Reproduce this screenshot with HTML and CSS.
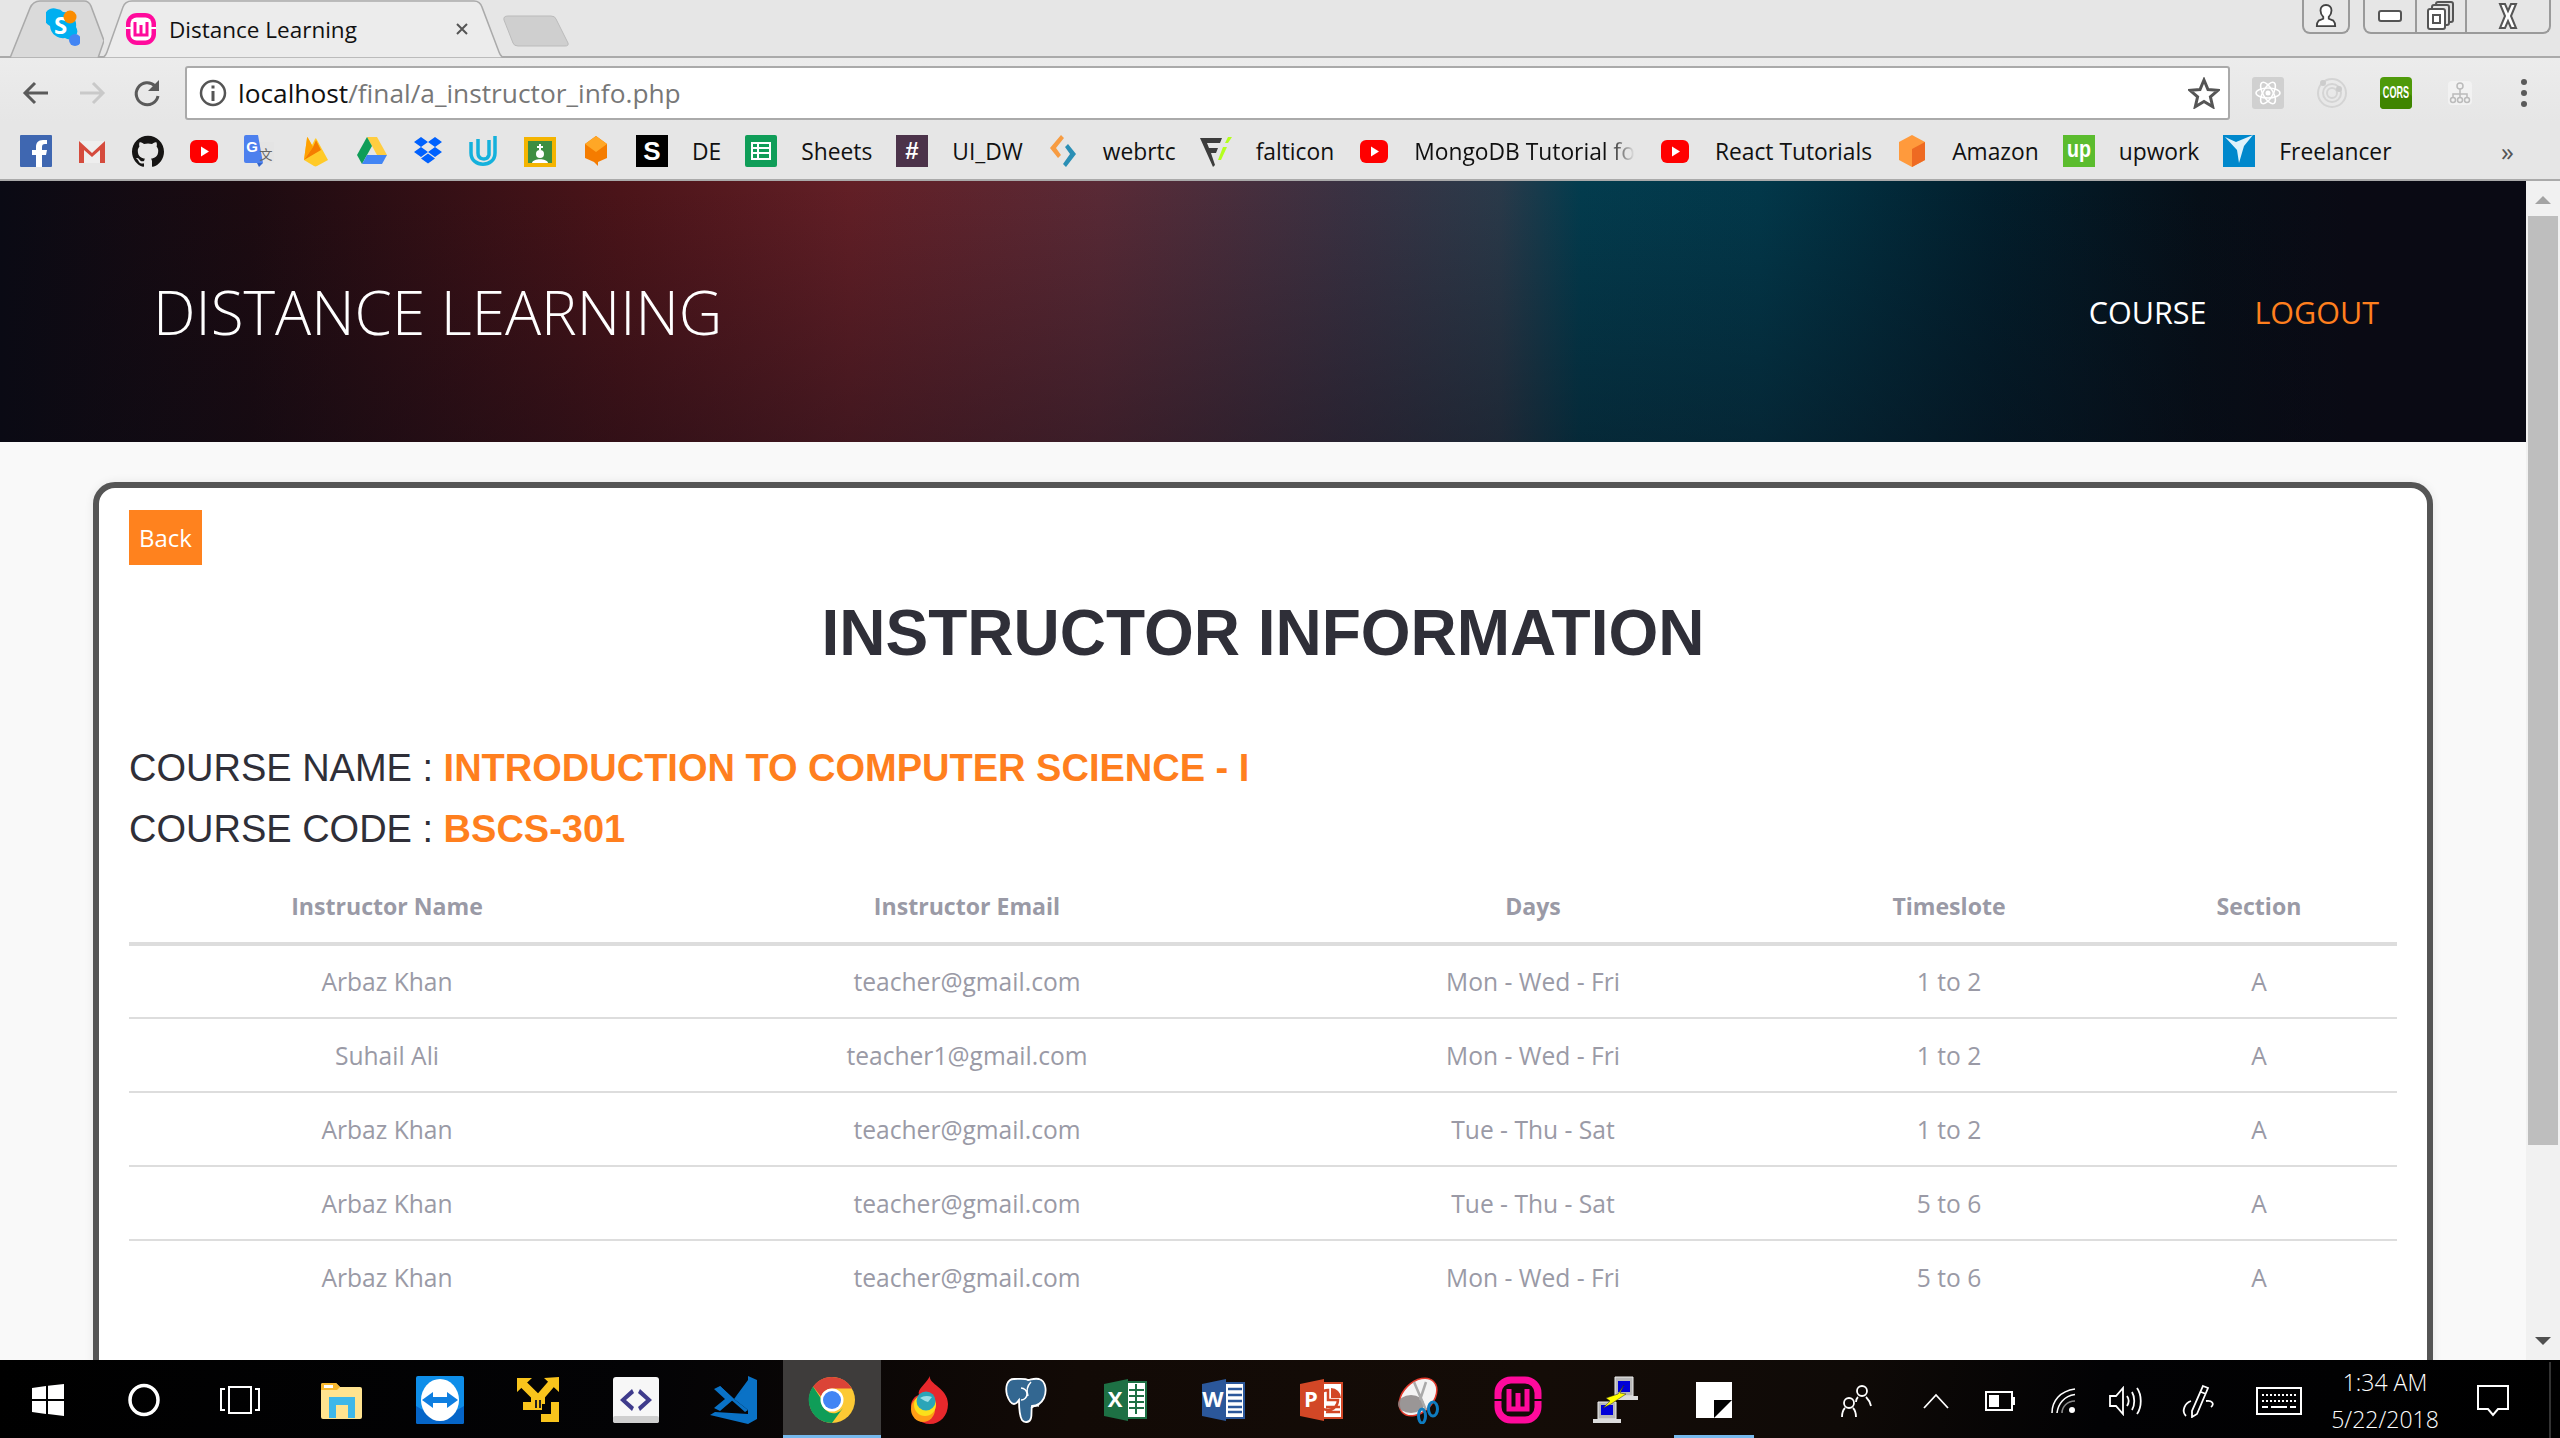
FILE: index.html
```html
<!DOCTYPE html>
<html lang="en">
<head>
  <meta charset="UTF-8" />
  <title>Distance Learning</title>
  <link rel="stylesheet" href="styles.css">
</head>
<body>
  <svg class="defs" width="0" height="0">
    <symbol id="yt" viewBox="0 0 32 32"><rect x="2" y="5" width="28" height="23" rx="6" fill="#f00"/><path d="M13 11.500l8 5-8 5z" fill="#fff"/></symbol>
  </svg>

  <div class="tabstrip">
    <div class="tab tab-pin">
      <svg class="tab-bg" viewBox="0 0 94 57" preserveAspectRatio="none"><path d="M0 57L20 8Q23 1 30 1H74Q79 1 81 6L94 40 88 57z" fill="#dadada" stroke="#aaa" stroke-width="1.500"/></svg>
      <svg class="tab-icon" width="34" height="38" viewBox="0 0 34 38"><path d="M11 1a8 8 0 0 1 6 3 13 13 0 0 1 13 15 8 8 0 0 1-11 11A13 13 0 0 1 4 18 9 9 0 0 1 11 1z" fill="#00aff0"/><text x="8" y="26" class="skype-s">S</text><circle cx="24" cy="9" r="6.500" fill="#fb8c00"/><circle cx="29" cy="32" r="6" fill="#4285f4"/></svg>
    </div>
    <div class="tab tab-active">
      <svg class="tab-bg" viewBox="0 0 408 57" preserveAspectRatio="none"><path d="M0 57Q6 57 8 51L24 7Q26 1 33 1H375Q381 1 383 7L400 51Q402 57 408 57z" fill="#ececec" stroke="#aaa" stroke-width="1.500"/></svg>
      <svg class="favicon" width="30" height="32" viewBox="0 0 30 32"><rect width="30" height="32" rx="11" fill="#ff0a9c"/><rect x="4.500" y="4.500" width="21" height="23" rx="6" fill="#fff"/><path d="M9 9v13h12V9M15 12v10" fill="none" stroke="#ff0a9c" stroke-width="3"/><path d="M0 14h5v2H0zM25 14h5v2h-5z" fill="#fff"/></svg>
      <span class="tab-title">Distance Learning</span>
      <svg class="tab-close" width="14" height="14" viewBox="0 0 14 14"><path d="M2 2l10 10M12 2L2 12" stroke="#555" stroke-width="2"/></svg>
    </div>
    <div class="tab tab-new">
      <svg class="tab-bg" viewBox="0 0 66 32" preserveAspectRatio="none"><path d="M1 5Q0 1 5 1H48Q52 1 53 4L65 28Q66 31 62 31H15Q11 31 10 28z" fill="#cfcfcf" stroke="#bbb"/></svg>
    </div>
    <div class="win-btns">
      <div class="win-group">
        <span class="win-btn win-profile"><svg width="22" height="26" viewBox="0 0 24 28"><path d="M12 2c4 0 6 3 6 6 0 3-1 5-3 7v2l5 2c1 1 2 3 2 6H2c0-3 1-5 2-6l5-2v-2C7 13 6 11 6 8c0-3 2-6 6-6z" fill="#fff" stroke="#444" stroke-width="2"/></svg></span>
      </div>
      <div class="win-group">
        <span class="win-btn"><svg width="26" height="16" viewBox="0 0 26 16"><rect x="2" y="3" width="22" height="10" rx="2" fill="#fff" stroke="#555" stroke-width="2"/></svg></span>
        <span class="win-btn"><svg width="28" height="30" viewBox="0 0 28 30"><rect x="9" y="1" width="17" height="20" rx="2" fill="#ddd" stroke="#555" stroke-width="2"/><rect x="5" y="4" width="17" height="20" rx="2" fill="#e6e6e6" stroke="#555" stroke-width="2"/><rect x="1" y="8" width="17" height="20" rx="2" fill="#fff" stroke="#555" stroke-width="2"/><rect x="6" y="14" width="7" height="8" fill="none" stroke="#555" stroke-width="2"/></svg></span>
        <span class="win-btn win-close"><svg width="24" height="28" viewBox="0 0 24 28"><path d="M4 2h5l3 7 3-7h5l-5 12 5 12h-5l-3-7-3 7H4l5-12z" fill="#fff" stroke="#555" stroke-width="2"/></svg></span>
      </div>
    </div>
  </div>

  <div class="toolbar">
    <div class="nav-icons">
      <svg width="32" height="32" viewBox="0 0 32 32"><path d="M28 16H6M15 6L5 16l10 10" fill="none" stroke="#5a5a5a" stroke-width="3"/></svg>
      <svg width="32" height="32" viewBox="0 0 32 32"><path d="M4 16h22M17 6l10 10-10 10" fill="none" stroke="#c9c9c9" stroke-width="3"/></svg>
      <svg width="32" height="32" viewBox="0 0 32 32"><path d="M26 19a11 11 0 1 1-3-10" fill="none" stroke="#5a5a5a" stroke-width="3"/><path d="M27 3v11H16z" fill="#5a5a5a"/></svg>
    </div>
    <div class="omnibox">
      <svg class="info" width="30" height="30" viewBox="0 0 30 30"><circle cx="15" cy="15" r="12" fill="none" stroke="#555" stroke-width="2.500"/><path d="M13.500 13h3v10h-3zM13.500 7.500h3v3h-3z" fill="#555"/></svg>
      <span class="url"><span class="url-host">localhost</span>/final/a_instructor_info.php</span>
      <svg class="star" width="32" height="32" viewBox="0 0 32 32"><path d="M16 3l4 9.500 10 .8-7.600 6.600 2.300 9.800L16 24.500l-8.700 5.200 2.300-9.800L2 13.300l10-.8z" fill="none" stroke="#555" stroke-width="3"/></svg>
    </div>
    <div class="ext-icons">
      <svg width="32" height="32" viewBox="0 0 32 32"><rect width="32" height="32" rx="3" fill="#d0d0d0"/><g fill="none" stroke="#fff" stroke-width="1.500"><ellipse cx="16" cy="16" rx="12" ry="5"/><ellipse cx="16" cy="16" rx="12" ry="5" transform="rotate(60 16 16)"/><ellipse cx="16" cy="16" rx="12" ry="5" transform="rotate(120 16 16)"/></g><circle cx="16" cy="16" r="2.500" fill="#fff"/></svg>
      <svg width="32" height="32" viewBox="0 0 32 32"><g fill="none" stroke="#d4d4d4" stroke-width="2"><circle cx="16" cy="16" r="14"/><circle cx="16" cy="16" r="9"/><circle cx="16" cy="16" r="5"/></g><circle cx="7" cy="6" r="3" fill="#ccc"/><circle cx="23" cy="12" r="3" fill="#ccc"/></svg>
      <svg width="32" height="32" viewBox="0 0 32 32"><rect width="32" height="32" rx="4" fill="#4f9a0a"/><rect y="17" width="32" height="15" rx="4" fill="#3f8500"/><g transform="translate(16 21) scale(.7 1.250)"><text class="cors">CORS</text></g></svg>
      <svg width="32" height="32" viewBox="0 0 32 32"><rect x="4" y="4" width="24" height="24" rx="4" fill="#f2f2f2"/><g fill="none" stroke="#bbb" stroke-width="1.500"><circle cx="16" cy="9" r="3"/><circle cx="9" cy="23" r="2.500"/><circle cx="16" cy="23" r="2.500"/><circle cx="23" cy="23" r="2.500"/><path d="M16 12v8M9 20v-3h14v3"/></g></svg>
      <svg width="32" height="32" viewBox="0 0 32 32"><circle cx="16" cy="5" r="3" fill="#5a5a5a"/><circle cx="16" cy="16" r="3" fill="#5a5a5a"/><circle cx="16" cy="27" r="3" fill="#5a5a5a"/></svg>
    </div>
  </div>

  <div class="bookmarks">
    <a class="bm"><svg class="bm-icon" viewBox="0 0 32 32"><rect width="32" height="32" rx="1" fill="#3f67b1"/><path d="M22 32V20h4l1-5h-5v-3c0-2 .8-3 3-3h2V5h-4c-5 0-7 3-7 7v3h-4v5h4v12z" fill="#fff"/></svg></a>
    <a class="bm"><svg class="bm-icon" viewBox="0 0 32 32"><path d="M3 6h26v22H3z" fill="#eee"/><path d="M3 28V6l13 12L29 6v22h-5V15l-8 7-8-7v13z" fill="#d54b3d"/></svg></a>
    <a class="bm"><svg class="bm-icon" viewBox="0 0 24 24"><path d="M12 .5C5.370.5 0 5.870 0 12.500c0 5.300 3.440 9.800 8.200 11.390.6.110.82-.26.82-.58v-2.030c-3.340.73-4.040-1.610-4.040-1.610-.55-1.390-1.340-1.760-1.340-1.760-1.090-.75.08-.73.08-.73 1.200.08 1.840 1.240 1.840 1.240 1.070 1.830 2.810 1.300 3.500 1 .11-.78.42-1.300.76-1.600-2.670-.3-5.470-1.330-5.470-5.930 0-1.310.47-2.380 1.240-3.220-.13-.3-.54-1.520.12-3.180 0 0 1.010-.32 3.300 1.230a11.500 11.500 0 0 1 6 0c2.290-1.550 3.300-1.230 3.300-1.230.66 1.660.25 2.880.12 3.180.77.84 1.240 1.910 1.240 3.220 0 4.610-2.810 5.630-5.480 5.920.43.37.81 1.100.81 2.220v3.290c0 .32.22.7.83.58C20.570 22.290 24 17.800 24 12.500 24 5.870 18.630.5 12 .5z" fill="#161514"/></svg></a>
    <a class="bm"><svg class="bm-icon"><use href="#yt"/></svg></a>
    <a class="bm"><svg class="bm-icon" viewBox="0 0 32 32"><path d="M15 7h15v21H15z" fill="#e4e4e4"/><path d="M0 2a2 2 0 0 1 2-2h12l5 28H2a2 2 0 0 1-2-2z" fill="#4d80ee"/><path d="M13 28h6l-4 4z" fill="#3566c9"/><text x="8" y="17" class="gt-g">G</text><text x="22" y="24" class="gt-a">文</text></svg></a>
    <a class="bm"><svg class="bm-icon" viewBox="0 0 32 32"><path d="M4 25L7 3c0-1 1-1 1 0l4 7 3-6c.5-1 1-1 1.500 0L28 25l-11 6c-1 .5-2 .5-3 0z" fill="#ffca28"/><path d="M4 25L7 3c0-1 1-1 1 0l5 9z" fill="#ffa000"/><path d="M13 12l3-7 5 10-17 10z" fill="#f57c00"/></svg></a>
    <a class="bm"><svg class="bm-icon" viewBox="0 0 32 32"><path d="M11 2h10l10 18H21z" fill="#ffcd40"/><path d="M11 2L1 20l5 9 10-18z" fill="#0f9d58"/><path d="M6 29h20l5-9H11z" fill="#4285f4"/></svg></a>
    <a class="bm"><svg class="bm-icon" viewBox="0 0 32 32"><path d="M9 2l7 5-7 5-7-5zM23 2l7 5-7 5-7-5zM9 12l7 5-7 5-7-5zM23 12l7 5-7 5-7-5zM16 18.500l7 5-7 5-7-5z" fill="#0061fe"/></svg></a>
    <a class="bm"><svg class="bm-icon" viewBox="0 0 32 32"><path d="M3 7v11c0 15 24 15 24 0V1" fill="none" stroke="#15b1dc" stroke-width="3.500"/><path d="M10 4v14c0 7 9 8 11 2V5" fill="none" stroke="#15b1dc" stroke-width="3.500"/></svg></a>
    <a class="bm"><svg class="bm-icon" viewBox="0 0 32 32"><rect y="2" width="32" height="30" fill="#f4b400"/><rect x="4" y="6" width="24" height="22" fill="#3e8e41"/><circle cx="16" cy="19" r="4" fill="#fff"/><path d="M8 28c1-5 15-5 16 0z" fill="#fff"/><path d="M15 9h2v2h2v2h-2v2h-2v-2h-2v-2h2z" fill="#fff"/></svg></a>
    <a class="bm"><svg class="bm-icon" viewBox="0 0 32 32"><path d="M16 1l11 8v14l-9 4v4l-4-4-9-4V9z" fill="#f57c00"/><path d="M16 1l11 8-11 8L5 9z" fill="#ffa726"/></svg></a>
    <a class="bm"><svg class="bm-icon" viewBox="0 0 32 32"><rect width="32" height="32" fill="#000"/><text x="16" y="25" class="slash-s">S</text></svg></a>
    <a class="bm bm-text-only"><span>DE</span></a>
    <a class="bm"><svg class="bm-icon" viewBox="0 0 32 32"><rect width="32" height="32" rx="2" fill="#0f9d58"/><path d="M7 8h18v16H7zM7 13h18M7 18h18M13 8v16" fill="none" stroke="#fff" stroke-width="2"/></svg><span>Sheets</span></a>
    <a class="bm"><svg class="bm-icon" viewBox="0 0 32 32"><rect width="32" height="32" fill="#4c334a"/><text x="16" y="24" class="slack-h">#</text></svg><span>UI_DW</span></a>
    <a class="bm"><svg class="bm-icon" viewBox="0 0 32 32"><path d="M14 0l3 3-8 10 5 7-3 3L3 13z" fill="#f79c42"/><path d="M18 12l3-3 8 10-10 13-3-3 7-10z" fill="#2a8fb5"/></svg><span>webrtc</span></a>
    <a class="bm"><svg class="bm-icon" viewBox="0 0 32 32"><path d="M0 3h22l-2 5H7l2 5h9l-2 5h-5l4 12-2 2z" fill="#3c3c3c"/><path d="M25 8l3-6h4l-4 6zM23 12h4l-6 13h-3z" fill="#b4ff1e"/></svg><span>falticon</span></a>
    <a class="bm"><svg class="bm-icon"><use href="#yt"/></svg><span class="bm-fade">MongoDB Tutorial fo</span></a>
    <a class="bm"><svg class="bm-icon"><use href="#yt"/></svg><span>React Tutorials</span></a>
    <a class="bm"><svg class="bm-icon" viewBox="0 0 32 32"><path d="M16 0l13 7v18l-13 7-13-7V7z" fill="#ff9a3c"/><path d="M16 14l13-7v18l-13 7z" fill="#ee6a22"/></svg><span>Amazon</span></a>
    <a class="bm"><svg class="bm-icon" viewBox="0 0 32 32"><rect width="32" height="32" fill="#5bbc2e"/><text x="16" y="22" class="upw" textLength="24" lengthAdjust="spacingAndGlyphs">up</text></svg><span>upwork</span></a>
    <a class="bm"><svg class="bm-icon" viewBox="0 0 32 32"><rect width="32" height="32" fill="#0088cc"/><path d="M2 2l11 5 17-7-9 11-5 17-2-13z" fill="#dff2fb"/></svg><span>Freelancer</span></a>
    <span class="bm-more">&raquo;</span>
  </div>

  <div class="page">
    <div class="content">
      <header class="site-header">
        <div class="brand">DISTANCE LEARNING</div>
        <nav class="site-nav">
          <a>COURSE</a>
          <a class="logout">LOGOUT</a>
        </nav>
      </header>
      <main class="main">
        <div class="card">
          <a class="back-btn">Back</a>
          <h1 class="card-title">INSTRUCTOR INFORMATION</h1>
          <h3 class="course-line">COURSE NAME : <b>INTRODUCTION TO COMPUTER SCIENCE - I</b></h3>
          <h3 class="course-line">COURSE CODE : <b>BSCS-301</b></h3>
          <table class="info-table">
            <thead>
              <tr><th class="c1">Instructor Name</th><th class="c2">Instructor Email</th><th class="c3">Days</th><th class="c4">Timeslote</th><th class="c5">Section</th></tr>
            </thead>
            <tbody>
              <tr><td>Arbaz Khan</td><td>teacher@gmail.com</td><td>Mon - Wed - Fri</td><td>1 to 2</td><td>A</td></tr>
              <tr><td>Suhail Ali</td><td>teacher1@gmail.com</td><td>Mon - Wed - Fri</td><td>1 to 2</td><td>A</td></tr>
              <tr><td>Arbaz Khan</td><td>teacher@gmail.com</td><td>Tue - Thu - Sat</td><td>1 to 2</td><td>A</td></tr>
              <tr><td>Arbaz Khan</td><td>teacher@gmail.com</td><td>Tue - Thu - Sat</td><td>5 to 6</td><td>A</td></tr>
              <tr><td>Arbaz Khan</td><td>teacher@gmail.com</td><td>Mon - Wed - Fri</td><td>5 to 6</td><td>A</td></tr>
            </tbody>
          </table>
        </div>
      </main>
    </div>
    <div class="scrollbar">
      <div class="arrow-up"></div>
      <div class="thumb"></div>
      <div class="arrow-down"></div>
    </div>
  </div>

  <div class="taskbar">
    <div class="task-start">
      <span class="task-btn"><svg width="48" height="48" viewBox="0 0 48 48"><path d="M8 12l14-2v13H8zM24 9.700L40 8v15H24zM8 25h14v13L8 36zM24 25h16v15l-16-2z" fill="#fff"/></svg></span>
      <span class="task-btn"><svg width="48" height="48" viewBox="0 0 48 48"><ellipse cx="24" cy="24" rx="14" ry="14.500" fill="none" stroke="#fff" stroke-width="3.500"/></svg></span>
      <span class="task-btn"><svg width="48" height="48" viewBox="0 0 48 48"><path d="M13 11h22v26H13z" fill="none" stroke="#fff" stroke-width="2"/><path d="M9 13H5v21h4M39 13h4v21h-4" fill="none" stroke="#fff" stroke-width="2"/></svg></span>
    </div>
    <div class="task-apps">
      <span class="task-app"><svg width="48" height="48" viewBox="0 0 48 48"><path d="M3 9a2 2 0 0 1 2-2h13l4 4h20a2 2 0 0 1 2 2v28a2 2 0 0 1-2 2H5a2 2 0 0 1-2-2z" fill="#ffe38f"/><path d="M3 9a2 2 0 0 1 2-2h13l4 4-3 3H3z" fill="#f8b82e"/><rect x="6" y="9" width="9" height="3" fill="#fff"/><path d="M11 42V21h26v21h-7V29H18v13z" fill="#3db7e9"/></svg></span>
      <span class="task-app"><svg width="48" height="48" viewBox="0 0 48 48"><rect width="48" height="48" rx="2" fill="#0e8ee9"/><path d="M0 30v16a2 2 0 0 0 2 2h44a2 2 0 0 0 2-2V30l-24 14z" fill="#0565c8"/><ellipse cx="24" cy="24" rx="19" ry="21" fill="#fff"/><path d="M6 24l11-8v5h14v-5l11 8-11 8v-5H17v5z" fill="#0e7ee0"/></svg></span>
      <span class="task-app"><svg width="48" height="48" viewBox="0 0 48 48"><g fill="none" stroke="#f9c41c" stroke-width="8"><path d="M9 8l12 12v8"/><path d="M39 6L27 20v8"/><path d="M41 26v16H27"/><path d="M9 30h14"/></g><path d="M3 2h15L3 16zM45 1v15L30 2zM20 22h8v12h-8z" fill="#f9c41c"/><path d="M21 24h6v8h-6z" fill="#222"/><path d="M23 24h2v8h-2z" fill="#f9c41c"/></svg></span>
      <span class="task-app"><svg width="48" height="48" viewBox="0 0 48 48"><rect x="1" y="1" width="46" height="46" rx="3" fill="#f7f7f7"/><rect x="1" y="40" width="46" height="7" rx="2" fill="#cfcfcf"/><path d="M20 13L8 24l12 11 2-4-8-7 8-7zM28 13l12 11-12 11-2-4 8-7-8-7z" fill="#3f3b8c"/></svg></span>
      <span class="task-app"><svg width="48" height="48" viewBox="0 0 48 48"><path d="M38 0l9 4v39l-9 5L0 39l5-3 33 2zM38 10v24L24 23z" fill="#0a72c6"/><path d="M24 23L10 35l-6-3 11-9L4 13l6-3z" fill="#0a72c6"/><path d="M10 10l14 13 14-19v8L24 23l14 11-3 2L10 14z" fill="#0a72c6"/></svg></span>
      <span class="task-app task-active"><svg width="48" height="48" viewBox="0 0 48 48"><circle cx="24" cy="24" r="23" fill="#fcc934"/><path d="M24 1a23 23 0 0 1 20 11.500H24a11.500 11.500 0 0 0-11 8L5 10.500A23 23 0 0 1 24 1z" fill="#db4437"/><path d="M5 10.500A23 23 0 0 0 24 47l11-15a11.500 11.500 0 0 1-21-8z" fill="#0f9d58"/><circle cx="24" cy="24" r="11.500" fill="#fff"/><circle cx="24" cy="24" r="9" fill="#4285f4"/></svg></span>
      <span class="task-app"><svg width="48" height="48" viewBox="0 0 48 48"><path d="M24 0c-2 8 18 12 18 28 0 12-8 20-18 20S5 40 5 30c0-6 4-10 8-11-2-6 6-10 11-19z" fill="#e8282c"/><ellipse cx="17" cy="33" rx="12" ry="13" fill="#ff9e16"/><ellipse cx="19" cy="29" rx="11" ry="11" fill="#fbe01b"/><circle cx="20" cy="25" r="9.500" fill="#2aa5b8"/><path d="M14 22c3-2 7-3 12-1l-4 5-3-1z" fill="#9adfe6"/></svg></span>
      <span class="task-app"><svg width="48" height="48" viewBox="0 0 48 48"><path d="M10 3c-7 0-9 8-7 16 2 6 5 9 7 9 3 0 4-3 5-4 0 6 0 15 3 20 2 3 8 3 9-2 1-3 0-8 1-12 4 0 9-2 12-8 3-7 2-17-5-19-6-1-8 1-11 1-3-2-9-1-14-1z" fill="#336791" stroke="#fff" stroke-width="1.800"/><path d="M27 6c-3 3-5 8-3 14M17 12a3 3 0 0 1 0 12M35 30c-3-1-5 0-8 2" fill="none" stroke="#fff" stroke-width="1.500"/></svg></span>
      <span class="task-app"><svg width="48" height="48" viewBox="0 0 48 48"><path d="M24 6h20v36H24z" fill="#fff" stroke="#1d7044" stroke-width="2"/><path d="M27 14h15M27 20h15M27 26h15M27 32h15M34 8v30" stroke="#1d7044" stroke-width="2"/><path d="M2 8l24-5v42L2 40z" fill="#1d7044"/><text x="13" y="31" class="office-l">X</text></svg></span>
      <span class="task-app"><svg width="48" height="48" viewBox="0 0 48 48"><path d="M24 7h20v35H24z" fill="#fff" stroke="#2b579a" stroke-width="2"/><path d="M28 13h14M28 19h14M28 25h14M28 31h14M28 36h14" stroke="#2b579a" stroke-width="2.500"/><path d="M2 8l24-5v42L2 40z" fill="#2b579a"/><text x="13" y="31" class="office-l">W</text></svg></span>
      <span class="task-app"><svg width="48" height="48" viewBox="0 0 48 48"><path d="M24 7h20v35H24z" fill="#fff" stroke="#d24726" stroke-width="2"/><path d="M33 12v10h10a10 10 0 0 0-10-10z" fill="#d24726"/><path d="M30 14a10 10 0 1 0 10 10H30zM28 31h14M28 36h14" fill="none" stroke="#d24726" stroke-width="2.500"/><path d="M2 8l24-5v42L2 40z" fill="#d24726"/><text x="13" y="31" class="office-l">P</text></svg></span>
      <span class="task-app"><svg width="48" height="48" viewBox="0 0 48 48"><ellipse cx="22" cy="21" rx="22" ry="15" transform="rotate(-45 22 21)" fill="#f4f4f4" stroke="#e23a2c" stroke-width="1.500"/><ellipse cx="15" cy="28" rx="13" ry="9" fill="#8a8585" opacity=".85"/><path d="M18 6l12 28M30 6L24 24" stroke="#aaa" stroke-width="2.500"/><ellipse cx="37" cy="33" rx="4.500" ry="7" fill="none" stroke="#0f7cc0" stroke-width="3"/><ellipse cx="26" cy="40" rx="3.500" ry="7" fill="none" stroke="#0f7cc0" stroke-width="3"/></svg></span>
      <span class="task-app"><svg width="48" height="48" viewBox="0 0 48 48"><rect x="4" y="4" width="40" height="40" rx="13" fill="none" stroke="#ff0a9c" stroke-width="7"/><path d="M15 13v20h18V13M24 17v16" fill="none" stroke="#ff0a9c" stroke-width="5"/><path d="M0 23h8v2H0zM40 23h8v2h-8z" fill="#120c08"/></svg></span>
      <span class="task-app"><svg width="48" height="48" viewBox="0 0 48 48"><path d="M23 1h18v19H23z" fill="#b8b8b8" stroke="#eee"/><path d="M26 5h12v11H26z" fill="#0000d8"/><path d="M22 20h24v4H22z" fill="#ddd"/><path d="M6 26h18v17H6z" fill="#b8b8b8" stroke="#eee"/><path d="M9 29h12v10H9z" fill="#0000d8"/><path d="M1 43h28v4H1z" fill="#ddd"/><path d="M14 22l12-4 6-9-4 8 6 1-15 10-8 4 7-7z" fill="#ffff00" stroke="#222" stroke-width=".5"/></svg></span>
      <span class="task-app task-open"><svg width="36" height="36" viewBox="0 0 36 36"><rect width="36" height="36" fill="#fff"/><path d="M18 18h18L18 36z" fill="#000"/></svg></span>
    </div>
    <div class="tray">
      <svg class="tray-people" width="34" height="36" viewBox="0 0 34 36"><g fill="none" stroke="#fff" stroke-width="1.800"><circle cx="22" cy="8" r="5"/><path d="M18 14c-2 2-2 5-2 5M26 14c2 2 4 4 5 9"/><circle cx="9" cy="20" r="5"/><path d="M5 25c-2 2-3 5-3 9M13 25c2 2 3 5 3 9"/></g></svg>
      <svg class="tray-caret" width="26" height="16" viewBox="0 0 26 16"><path d="M1 15L13 2l12 13" fill="none" stroke="#fff" stroke-width="1.800"/></svg>
      <svg class="tray-batt" width="30" height="20" viewBox="0 0 30 20"><rect x="1" y="1" width="26" height="18" fill="none" stroke="#fff" stroke-width="2"/><rect x="4" y="4" width="10" height="12" fill="#fff"/><rect x="28" y="6" width="2" height="8" fill="#fff"/></svg>
      <svg class="tray-wifi" width="28" height="26" viewBox="0 0 28 26"><g fill="none" stroke="#fff" stroke-width="1.600"><path d="M1 25C1 13 9 3 24 1"/><path d="M6 25C7 16 13 8 24 6.500"/></g><path d="M11 25c0-6 5-12 13-12" fill="none" stroke="#888" stroke-width="1.600"/><circle cx="21" cy="22" r="3" fill="#fff"/></svg>
      <svg class="tray-vol" width="34" height="30" viewBox="0 0 34 30"><path d="M1 10h6l7-8v26l-7-8H1z" fill="none" stroke="#fff" stroke-width="1.800"/><path d="M18 10c2 3 2 7 0 10M23 6c3 5 3 13 0 18M28 2c5 7 5 19 0 26" fill="none" stroke="#fff" stroke-width="1.800"/></svg>
      <svg class="tray-pen" width="34" height="34" viewBox="0 0 34 34"><path d="M22 2l5 2-11 26-5 3 0-6zM20 8l5 2" fill="none" stroke="#fff" stroke-width="1.800"/><path d="M10 17c-6 2-10 10-5 15M25 17c6-1 9 3 5 6" fill="none" stroke="#fff" stroke-width="1.800"/></svg>
      <svg class="tray-kbd" width="46" height="28" viewBox="0 0 46 28"><rect x="1" y="1" width="44" height="26" fill="none" stroke="#fff" stroke-width="2"/><path d="M6 8h34M6 14h34" stroke="#fff" stroke-width="2" stroke-dasharray="2 2"/><path d="M6 20h6M15 20h16M34 20h6" stroke="#fff" stroke-width="2"/></svg>
      <div class="clock"><div>1:34 AM</div><div>5/22/2018</div></div>
      <svg class="tray-note" width="32" height="32" viewBox="0 0 32 32"><path d="M1 1h30v23H21l-5 6-5-6H1z" fill="none" stroke="#fff" stroke-width="2"/></svg>
      <div class="show-desktop"></div>
    </div>
  </div>
</body>
</html>
```

FILE: styles.css
```css
* {
  box-sizing: border-box;
}

html, body {
  margin: 0;
  padding: 0;
  height: 1438px;
  overflow: hidden;
}

body {
  width: 2560px;
  display: flex;
  flex-direction: column;
  font-family: "Open Sans", sans-serif;
  background: #f9f9f9;
}

.defs {
  display: block;
  height: 0;
}

/* browser chrome */
.tabstrip {
  height: 58px;
  display: flex;
  align-items: flex-start;
  background: #e6e6e6;
  border-bottom: 2px solid #aaa;
}

.tab {
  position: relative;
  display: flex;
  align-items: center;
}

.tab-bg {
  position: absolute;
  left: 0;
  top: 0;
  width: 100%;
  height: 100%;
}

.tab-pin {
  width: 94px;
  height: 58px;
  margin-left: 10px;
}

.tab-icon {
  position: relative;
  margin: 0 0 4px 36px;
}

.tab-active {
  width: 408px;
  height: 58px;
  margin-left: -5px;
}

.favicon {
  position: relative;
  margin: 0 0 0 27px;
}

.tab-title {
  position: relative;
  margin-left: 13px;
  width: 286px;
  font-size: 22.5px;
  color: #111;
}

.tab-close {
  position: relative;
  margin-left: 0;
}

.tab-new {
  width: 66px;
  height: 32px;
  margin: 15px 0 0 -4px;
}

.win-btns {
  margin-left: auto;
  margin-right: 9px;
  display: flex;
  gap: 13px;
}

.win-group {
  display: flex;
  height: 34px;
  border: 2px solid #9a9a9a;
  border-top: none;
  border-radius: 0 0 8px 8px;
}

.win-btn {
  width: 50px;
  display: flex;
  align-items: center;
  justify-content: center;
  border-left: 2px solid #9a9a9a;
}

.win-btn:first-child {
  border-left: none;
}

.win-profile {
  width: 44px;
}

.win-close {
  width: 84px;
}

.toolbar {
  height: 64px;
  padding-top: 6px;
  display: flex;
  align-items: center;
  background: linear-gradient(#ececec, #e6e6e6);
}

.nav-icons {
  width: 185px;
  display: flex;
  padding-left: 20px;
  gap: 24px;
}

.omnibox {
  width: 2045px;
  height: 54px;
  display: flex;
  align-items: center;
  background: #fff;
  border: 2px solid #aaa;
  border-radius: 3px;
  padding: 0 8px 0 11px;
}

.url {
  margin-left: 10px;
  font-size: 26.3px;
  color: #777;
  flex: 1;
}

.url-host {
  color: #111;
}

.ext-icons {
  display: flex;
  padding-left: 22px;
  gap: 32px;
}

.cors {
  font: bold 13px "Liberation Sans", sans-serif;
  fill: #fff;
  text-anchor: middle;
}

.skype-s {
  font: bold 24px "Open Sans", sans-serif;
  fill: #fff;
}

/* bookmarks bar */
.bookmarks {
  height: 59px;
  display: flex;
  align-items: center;
  padding-left: 8px;
  background: #e6e6e6;
  border-bottom: 2px solid #aaa;
  font-size: 22.8px;
  color: #111;
}

.bm {
  display: flex;
  align-items: center;
  gap: 24px;
  padding: 0 12px;
  white-space: nowrap;
}

.bm span {
  padding-top: 2px;
}

.bm-icon {
  width: 32px;
  height: 32px;
  flex: none;
}

.bm-fade {
  -webkit-mask-image: linear-gradient(to right, #000 88%, transparent);
  mask-image: linear-gradient(to right, #000 88%, transparent);
}

.bm-more {
  margin-left: auto;
  margin-right: 46px;
  font-size: 26px;
  color: #555;
}

.gt-g {
  font: bold 15px "Liberation Sans", sans-serif;
  fill: #fff;
  text-anchor: middle;
}

.gt-a {
  font: 13px "Noto Sans CJK SC", sans-serif;
  fill: #666;
  text-anchor: middle;
}

.slash-s {
  font: bold 26px "Liberation Sans", sans-serif;
  fill: #fff;
  text-anchor: middle;
}

.slack-h {
  font: bold 24px "Liberation Sans", sans-serif;
  fill: #fff;
  text-anchor: middle;
}

.upw {
  font: bold 24px "Liberation Sans", sans-serif;
  fill: #fff;
  text-anchor: middle;
}

/* page */
.page {
  height: 1179px;
  display: flex;
}

.content {
  flex: 1;
  overflow: hidden;
}

.scrollbar {
  width: 34px;
  background: #f1f1f1;
  display: flex;
  flex-direction: column;
  align-items: center;
}

.arrow-up {
  margin-top: 15px;
  border-left: 8px solid transparent;
  border-right: 8px solid transparent;
  border-bottom: 8px solid #a3a3a3;
}

.thumb {
  width: 30px;
  height: 929px;
  margin-top: 12px;
  background: #bebebe;
}

.arrow-down {
  margin-top: 192px;
  border-left: 8px solid transparent;
  border-right: 8px solid transparent;
  border-top: 8px solid #505050;
}

.site-header {
  height: 261px;
  display: flex;
  align-items: center;
  justify-content: space-between;
  padding: 0 147px 0 153px;
  background:
    linear-gradient(rgba(10, 10, 20, 0), rgba(10, 10, 20, 0.38)),
    linear-gradient(to right, #0a0a14 0, #1d0b11 250px, #4c1419 620px, #631f26 850px, #5a2a36 1100px, #3a3243 1350px, #2a3a4a 1500px, #033c4e 1580px, #02384a 1760px, #021f2d 1990px, #060f18 2200px, #0a0a14 2350px);
}

.brand {
  font-size: 60.2px;
  font-weight: 300;
  color: #fff;
}

.site-nav {
  display: flex;
  gap: 48px;
}

.site-nav a {
  font-size: 30.5px;
  color: #fff;
}

.site-nav .logout {
  color: #ff7f1e;
}

.main {
  padding: 40px 93px 0;
}

.card {
  width: 2340px;
  height: 1000px;
  background: #fff;
  border: 6px solid #555;
  border-radius: 22px;
  padding: 22px 30px;
  box-shadow: 0 0 10px rgba(0, 0, 0, 0.08);
}

.back-btn {
  display: block;
  width: 73px;
  height: 55px;
  line-height: 55px;
  text-align: center;
  font-size: 24px;
  color: #fff;
  background: #ff821e;
}

.card-title {
  margin: 30px 0 67px;
  line-height: 76px;
  text-align: center;
  font-family: "Liberation Sans", sans-serif;
  font-size: 64px;
  font-weight: bold;
  color: #2f2f38;
}

.course-line {
  margin: 0;
  height: 61px;
  line-height: 61px;
  font-family: "Liberation Sans", sans-serif;
  font-size: 38px;
  font-weight: normal;
  color: #2f2f38;
}

.course-line b {
  color: #ff7f1e;
}

.info-table {
  width: 2268px;
  margin-top: 10px;
  border-collapse: collapse;
  table-layout: fixed;
  font-size: 24.6px;
  color: #9a9aa6;
  text-align: center;
}

.info-table th {
  height: 74px;
  font-size: 23.1px;
  font-weight: 700;
  border-bottom: 4px solid #ddd;
}

.info-table td {
  height: 74px;
  padding: 0;
  border-bottom: 2px solid #ddd;
}

.info-table tbody tr:last-child td {
  border-bottom: none;
}

.c1 { width: 516px; }
.c2 { width: 644px; }
.c3 { width: 488px; }
.c4 { width: 344px; }
.c5 { width: 276px; }

/* windows taskbar */
.taskbar {
  height: 78px;
  display: flex;
  align-items: center;
  background:
    linear-gradient(100deg, #000 0, #030305 25%, #120a06 42%, #140c07 60%, #0f0a07 72%, #020204 82%, #000 100%);
}

.task-start {
  display: flex;
  padding-top: 2px;
}

.task-btn {
  width: 96px;
  display: flex;
  justify-content: center;
}

.task-apps {
  display: flex;
  margin-left: 5px;
}

.task-app {
  position: relative;
  width: 98px;
  height: 78px;
  padding-top: 4px;
  display: flex;
  align-items: center;
  justify-content: center;
  border-bottom: 2px solid transparent;
}

.task-active {
  background: #3e3c3b;
  border-bottom: 3px solid #76b9ed;
}

.task-open::after {
  content: "";
  position: absolute;
  left: 9px;
  right: 9px;
  bottom: -2px;
  height: 3px;
  background: #76b9ed;
}

.office-l {
  font: bold 22px "Open Sans", sans-serif;
  fill: #fff;
  text-anchor: middle;
}

.tray {
  display: flex;
  align-items: center;
  margin-left: 77px;
  padding-top: 3px;
  flex: 1;
  height: 78px;
  color: #fff;
}

.tray-caret { margin-left: 49px; }
.tray-batt { margin-left: 36px; }
.tray-wifi { margin-left: 36px; }
.tray-vol { margin-left: 30px; }
.tray-pen { margin-left: 38px; }
.tray-kbd { margin-left: 41px; }

.clock {
  width: 150px;
  margin-left: 8px;
  text-align: center;
  font-size: 23px;
  line-height: 37px;
  font-weight: 300;
}

.tray-note {
  margin-left: 17px;
}

.show-desktop {
  width: 2px;
  height: 78px;
  margin-left: 40px;
  background: #333;
}
```
